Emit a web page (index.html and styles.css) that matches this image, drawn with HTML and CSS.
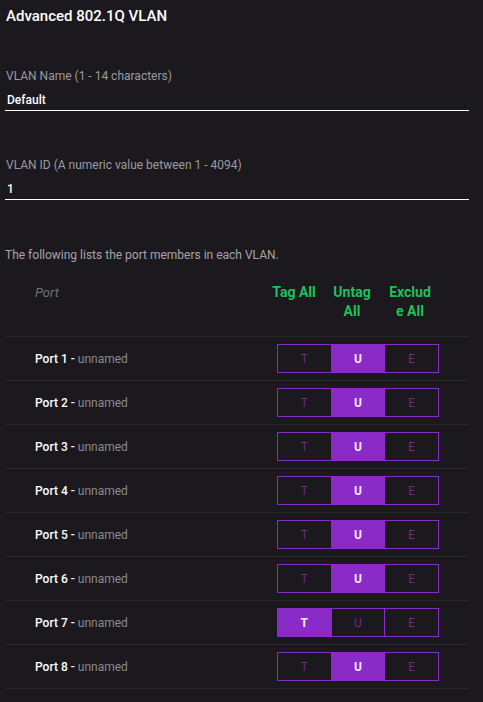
FILE: index.html
```html
<!DOCTYPE html>
<html>
<head>
<meta charset="utf-8">
<link rel="stylesheet" href="styles.css">
</head>
<body>
<div class="page">
  <h1 class="title">Advanced 802.1Q VLAN</h1>

  <div class="field field-first">
    <div class="label">VLAN Name (1 - 14 characters)</div>
    <div class="input">Default</div>
  </div>

  <div class="field">
    <div class="label">VLAN ID (A numeric value between 1 - 4094)</div>
    <div class="input">1</div>
  </div>

  <p class="desc">The following lists the port members in each VLAN.</p>

  <div class="table">
    <div class="head">
      <div class="head-port">Port</div>
      <div class="head-col">Tag All</div>
      <div class="head-col">Untag All</div>
      <div class="head-col">Exclude All</div>
    </div>

    <div class="row"><div class="port"><b>Port 1 -</b> <span>unnamed</span></div><div class="seg"><div>T</div><div class="on">U</div><div>E</div></div></div>
    <div class="row"><div class="port"><b>Port 2 -</b> <span>unnamed</span></div><div class="seg"><div>T</div><div class="on">U</div><div>E</div></div></div>
    <div class="row"><div class="port"><b>Port 3 -</b> <span>unnamed</span></div><div class="seg"><div>T</div><div class="on">U</div><div>E</div></div></div>
    <div class="row"><div class="port"><b>Port 4 -</b> <span>unnamed</span></div><div class="seg"><div>T</div><div class="on">U</div><div>E</div></div></div>
    <div class="row"><div class="port"><b>Port 5 -</b> <span>unnamed</span></div><div class="seg"><div>T</div><div class="on">U</div><div>E</div></div></div>
    <div class="row"><div class="port"><b>Port 6 -</b> <span>unnamed</span></div><div class="seg"><div>T</div><div class="on">U</div><div>E</div></div></div>
    <div class="row"><div class="port"><b>Port 7 -</b> <span>unnamed</span></div><div class="seg"><div class="on">T</div><div>U</div><div>E</div></div></div>
    <div class="row"><div class="port"><b>Port 8 -</b> <span>unnamed</span></div><div class="seg"><div>T</div><div class="on">U</div><div>E</div></div></div>
  </div>
</div>
</body>
</html>
```

FILE: styles.css
```css
html, body {
  margin: 0;
  padding: 0;
  background: #1b191e;
}
body {
  font-family: Roboto, "Liberation Sans", Arial, sans-serif;
  color: #ffffff;
}
.page {
  padding: 6px 14px 0 5px;
  height: 696px;
  overflow: hidden;
}
.title {
  margin: 0 0 0 1px;
  font-size: 15px;
  font-weight: 500;
  line-height: 20px;
  color: #ffffff;
}
.field {
  margin-top: 46px;
}
.field-first {
  margin-top: 42px;
}
.label {
  font-size: 12px;
  line-height: 16px;
  color: #9b9a9e;
  padding-left: 1px;
}
.input {
  margin-top: 8px;
  font-size: 12px;
  font-weight: 500;
  line-height: 16px;
  padding: 0 0 2px 2px;
  border-bottom: 1px solid #ffffff;
  color: #ffffff;
}
.desc {
  margin: 47px 0 0 0;
  font-size: 12px;
  line-height: 16px;
  color: #a5a4a8;
}
.table {
  margin-top: 10px;
}
.head {
  display: flex;
  padding: 10px 30px 15px 0;
  border-bottom: 1px solid #29272d;
}
.head-port {
  flex: 1;
  padding-left: 30px;
  font-size: 13px;
  font-style: italic;
  line-height: 19px;
  color: #707070;
}
.head-col {
  width: 58px;
  padding: 0 6px;
  box-sizing: border-box;
  text-align: center;
  font-size: 14px;
  font-weight: 700;
  line-height: 19px;
  color: #1fbf5c;
  word-break: break-all;
}
.row {
  display: flex;
  align-items: center;
  height: 43px;
  padding-right: 30px;
  border-bottom: 1px solid #29272d;
}
.port {
  flex: 1;
  padding-left: 30px;
  font-size: 12px;
  color: #ffffff;
}
.port b {
  font-weight: 500;
}
.port span {
  color: #8a898d;
}
.seg {
  display: flex;
  width: 162px;
  height: 29px;
  box-sizing: border-box;
  border: 1px solid #8a2bc8;
}
.seg div {
  flex: 1;
  display: flex;
  align-items: center;
  justify-content: center;
  font-size: 12px;
  color: #6b2c90;
}
.seg div + div {
  border-left: 1px solid #8a2bc8;
}
.seg .on {
  background: #8a2bc8;
  color: #f6e8ff;
  font-weight: 700;
}
```
